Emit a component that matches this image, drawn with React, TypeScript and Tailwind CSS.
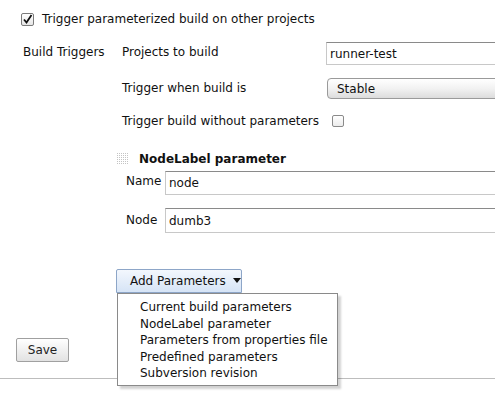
import React from 'react'

const font = { fontFamily: '"DejaVu Sans", Verdana, sans-serif' }

function Check({ checked }: { checked?: boolean }) {
  return (
    <span className="inline-flex w-[13px] h-[13px] items-center justify-center rounded-[2px] border border-[#7a7a7a] bg-gradient-to-b from-white to-[#e6e6e6]">
      {checked && (
        <svg width="11" height="11" viewBox="0 0 11 11">
          <path d="M2 5.5 L4.5 8.5 L9.5 1" fill="none" stroke="#111" strokeWidth="1.8" />
        </svg>
      )}
    </span>
  )
}

function Field({ value, h }: { value: string; h: string }) {
  return (
    <div className={`w-[340px] ${h} shrink-0 border border-[#c8c8c8] border-t-[#8a8a8a] bg-white pl-[3px] flex items-center`}>
      {value}
    </div>
  )
}

function DragHandle() {
  return (
    <svg width="14" height="14" viewBox="0 0 14 14">
      {[0, 1, 2, 3, 4, 5].map((r) =>
        [0, 1, 2, 3, 4, 5].map((c) => (
          <rect key={`${r}-${c}`} x={c * 2 + 1} y={r * 2 + 1} width="1" height="1" fill="#c4c4c4" />
        ))
      )}
    </svg>
  )
}

const menuItems = [
  'Current build parameters',
  'NodeLabel parameter',
  'Parameters from properties file',
  'Predefined parameters',
  'Subversion revision',
]

export default function App() {
  return (
    <div className="relative w-[495px] h-[403px] overflow-hidden whitespace-nowrap bg-white text-[12px] text-[#111] leading-[16px]" style={font}>
      {/* top checkbox */}
      <div className="flex items-center gap-[8px] pl-[21px] pt-[11px]">
        <Check checked />
        <span>Trigger parameterized build on other projects</span>
      </div>

      <div className="flex pt-[15px]">
        <div className="w-[122px] shrink-0 pl-[23px] pt-[2px]">Build Triggers</div>
        <div className="flex-1 flex flex-col">
          <div className="flex">
            <div className="w-[204px] shrink-0 pt-[2px]">Projects to build</div>
            <div className="h-[23px] w-[200px] shrink-0 border border-[#c8c8c8] border-t-[#8a8a8a] bg-white pl-[3px] flex items-center">
              runner-test
            </div>
          </div>
          <div className="flex mt-[13px]">
            <div className="w-[205px] shrink-0 pt-[2px]">Trigger when build is</div>
            <div className="h-[21px] w-[200px] shrink-0 rounded-[4px] border border-[#9a9a9a] bg-gradient-to-b from-white via-[#f2f2f2] to-[#dcdcdc] pl-[9px] flex items-center">
              Stable
            </div>
          </div>
          <div className="flex items-center mt-[14px]">
            <div className="w-[210px] shrink-0">Trigger build without parameters</div>
            <span className="w-[12px] h-[12px] rounded-[2px] border border-[#8a8a8a] bg-gradient-to-b from-white to-[#ececec]" />
          </div>

          {/* NodeLabel parameter */}
          <div className="ml-[-6px] mt-[22px] flex items-center gap-[9px]">
            <DragHandle />
            <span className="font-bold">NodeLabel parameter</span>
          </div>
          <div className="flex mt-[4px] ml-[4px]">
            <div className="w-[39px] shrink-0 pt-[2px]">Name</div>
            <Field value="node" h="h-[24px]" />
          </div>
          <div className="flex mt-[13px] ml-[4px]">
            <div className="w-[39px] shrink-0 pt-[4px]">Node</div>
            <Field value="dumb3" h="h-[25px]" />
          </div>

          <div className="relative mt-[36px] ml-[-6px]">
            <button className="h-[24px] w-[126px] flex items-center gap-[7px] pl-[13px] rounded-t-[2px] border border-[#8da6c8] bg-gradient-to-b from-[#f3f7fd] to-[#d6e4f6] text-[12px]">
              <span>Add Parameters</span>
              <svg width="8" height="6" viewBox="0 0 8 6">
                <path d="M0 0 H8 L4 5 Z" fill="#111" />
              </svg>
            </button>
            <div className="absolute left-[1px] top-[24px] z-10 w-[221px] border border-[#8a8a8a] bg-white pl-[22px] pt-[5px] pb-[3px] shadow-[3px_3px_2px_rgba(0,0,0,0.18)]">
              {menuItems.map((m) => (
                <div key={m} className="h-[16.6px] leading-[16px]">
                  {m}
                </div>
              ))}
            </div>
          </div>
        </div>
      </div>

      <div className="pl-[16px] mt-[45px]">
        <button className="h-[24px] w-[53px] rounded-[2px] border border-[#a0a0a0] bg-gradient-to-b from-white to-[#e2e2e2] text-[12px] text-[#222] flex items-center justify-center">
          Save
        </button>
      </div>
      <div className="mt-[16px] h-px bg-[#bdbdbd]" />
    </div>
  )
}
